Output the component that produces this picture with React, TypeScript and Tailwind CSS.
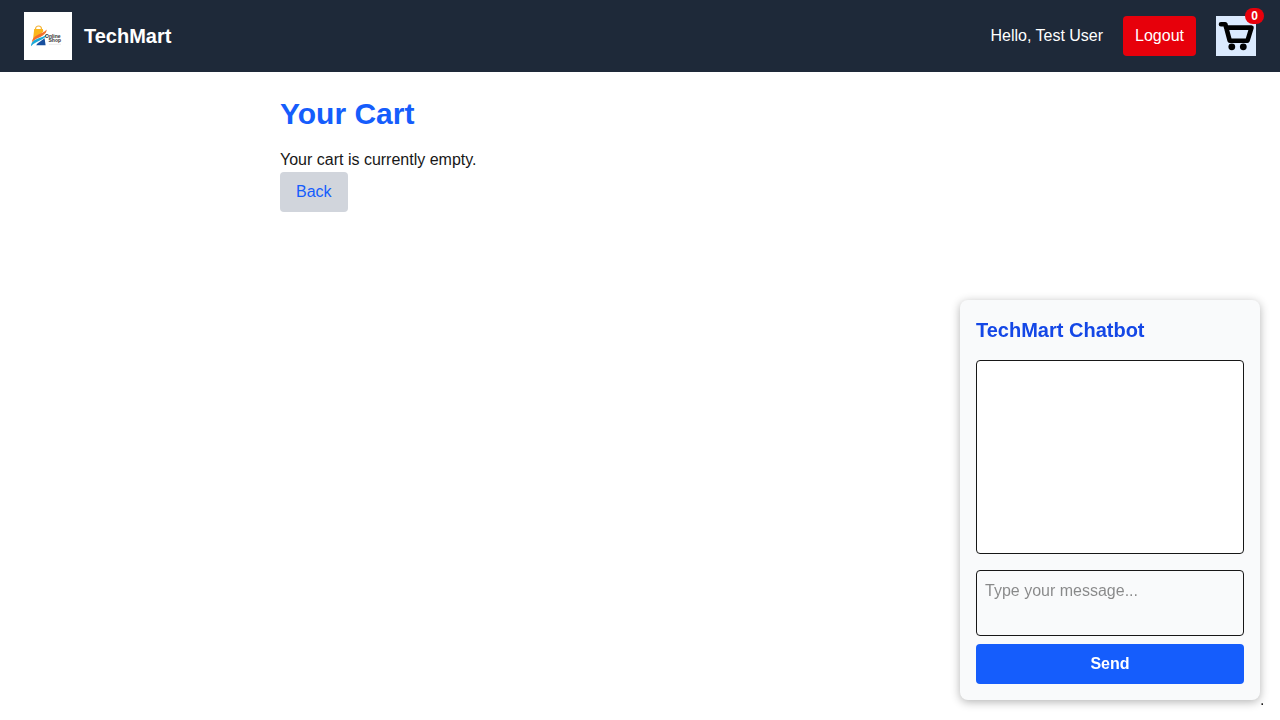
import { useState } from "react";

function ShopLogo() {
  return (
    <svg viewBox="0 0 48 48" className="size-12 bg-white" role="img" aria-label="Online Shop">
      <path d="M11.500 18v-1a3 3 0 0 1 6 0v1" fill="none" stroke="#f2b43a" strokeWidth="1.200" />
      <path d="M10.200 17h8.600l.6 2.200c-2 3-6.500 4.500-10.400 8.300z" fill="#fbb61c" />
      <path d="M22.600 17.500c.3 2.200-1.200 4.200-3.800 6-4 2.500-8 3.500-11 6.800.2-3.500 2.500-5.500 6.200-7.500 3.500-1.800 6.500-2.500 8.600-5.300z" fill="#f36f2b" />
      <path d="M22.600 22.300c0 2.200-1.800 3.700-4.800 5.200-4.200 2.200-7.800 3.500-10.800 6.700.1-3.700 2.500-5.800 6.300-7.400 3.500-1.500 6.800-1.800 9.300-4.500z" fill="#19a9d8" />
      <path d="M20.600 26.200l1 7.100h-9.500c1.600-3 5.500-4.500 8.500-7.100z" fill="#174f9e" />
      <text x="21" y="25.500" fontSize="5" fontWeight="700" fill="#333">Online</text>
      <text x="24.500" y="30.300" fontSize="5" fontWeight="700" fill="#333">Shop</text>
      <path d="M25 32.300h12" stroke="#dddddd" strokeWidth=".6" />
    </svg>
  );
}

function CartIcon() {
  return (
    <svg viewBox="0 0 40 40" className="size-10 bg-blue-100" aria-hidden="true">
      <path d="M5 8.200h4.300l4.400 16.500h17.800L35.500 11.600H10" fill="none" stroke="black" strokeWidth="4.600" strokeLinejoin="round" strokeLinecap="round" />
      <circle cx="15.800" cy="30.800" r="3.400" />
      <circle cx="27.300" cy="30.800" r="3.400" />
    </svg>
  );
}

function Header() {
  return (
    <header className="flex items-center justify-between bg-gray-800 px-6 py-3 text-white">
      <a href="#home" className="flex items-center gap-3">
        <ShopLogo />
        <span className="text-xl font-bold">TechMart</span>
      </a>
      <div className="flex items-center gap-5">
        <span>Hello, Test User</span>
        <button type="button" className="rounded-sm bg-red-600 px-3 py-2">
          Logout
        </button>
        <a href="#cart" aria-label="Cart" className="relative">
          <CartIcon />
          <span className="absolute -top-2 -right-2 rounded-full bg-red-600 px-1.5 text-xs font-bold">0</span>
        </a>
      </div>
    </header>
  );
}

function Chatbot() {
  const [message, setMessage] = useState("");
  return (
    <aside className="fixed right-5 bottom-5 w-[300px] rounded-lg bg-gray-50 p-4 shadow-[0_2px_10px_rgba(0,0,0,0.3)]">
      <h2 className="mb-4 text-xl font-bold text-blue-700">TechMart Chatbot</h2>
      <div className="mb-4 h-[194px] overflow-y-auto rounded-sm border border-neutral-900 bg-white" />
      <form className="flex flex-col gap-2" onSubmit={(event) => event.preventDefault()}>
        <textarea
          aria-label="Message"
          rows={2}
          placeholder="Type your message..."
          value={message}
          onChange={(event) => setMessage(event.target.value)}
          className="resize-none rounded-sm border border-neutral-900 p-2 text-neutral-900"
        />
        <button type="submit" className="rounded-sm bg-blue-600 py-2 font-bold text-white">
          Send
        </button>
      </form>
      <span className="absolute -bottom-3 left-full">.</span>
    </aside>
  );
}

export default function App() {
  return (
    <div className="min-h-screen bg-white font-['Liberation_Sans',Arial,sans-serif] text-neutral-900">
      <Header />
      <main className="mx-auto max-w-3xl p-6">
        <h1 className="mb-4 text-3xl font-bold text-blue-600">Your Cart</h1>
        <p>Your cart is currently empty.</p>
        <button type="button" className="rounded-sm bg-gray-300 px-4 py-2 text-blue-600">
          Back
        </button>
      </main>
      <Chatbot />
    </div>
  );
}
